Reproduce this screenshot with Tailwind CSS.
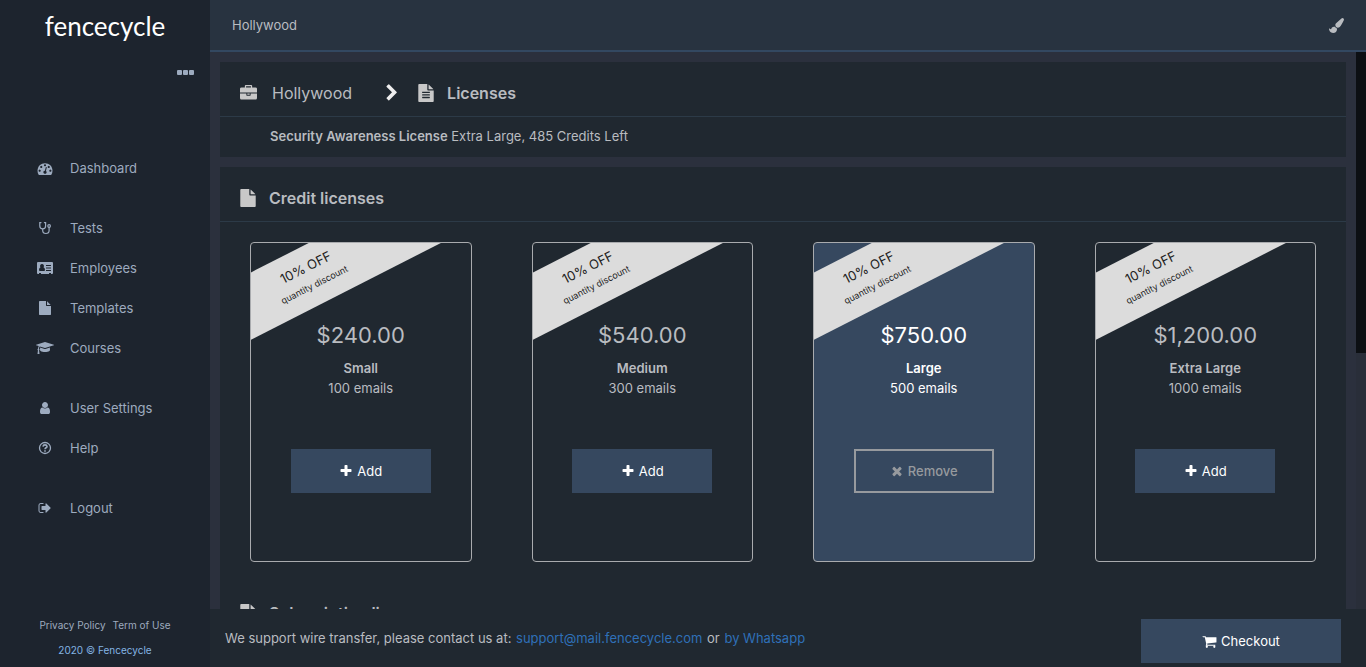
<!DOCTYPE html>
<html lang="en">
  <head>
    <meta charset="UTF-8" />
    <meta name="viewport" content="width=device-width, initial-scale=1.0" />
    <title>Fencecycle - Licenses</title>
    <script src="https://cdn.jsdelivr.net/npm/@tailwindcss/browser@4"></script>
  </head>
  <body class="flex h-screen overflow-hidden bg-[#2b303d] font-['Inter',sans-serif] text-[13px] leading-5 text-[#b9bcc0]">
    <!-- icon sprite -->
    <svg class="hidden" aria-hidden="true" xmlns="http://www.w3.org/2000/svg">
      <symbol id="file" viewBox="0 0 1792 1792">
        <path d="M1152 512v-472q22 14 36 28l408 408q14 14 28 36h-472zm-128 32q0 40 28 68t68 28h544v1056q0 40-28 68t-68 28h-1344q-40 0-68-28t-28-68v-1600q0-40 28-68t68-28h800v544z" />
      </symbol>
      <symbol id="file-text" viewBox="0 0 1792 1792">
        <path d="M1596 476q14 14 28 36h-472v-472q22 14 36 28zm-476 164h544v1056q0 40-28 68t-68 28h-1344q-40 0-68-28t-28-68v-1600q0-40 28-68t68-28h800v544q0 40 28 68t68 28zm160 736v-64q0-14-9-23t-23-9h-704q-14 0-23 9t-9 23v64q0 14 9 23t23 9h704q14 0 23-9t9-23zm0-256v-64q0-14-9-23t-23-9h-704q-14 0-23 9t-9 23v64q0 14 9 23t23 9h704q14 0 23-9t9-23zm0-256v-64q0-14-9-23t-23-9h-704q-14 0-23 9t-9 23v64q0 14 9 23t23 9h704q14 0 23-9t9-23z" />
      </symbol>
      <symbol id="plus" viewBox="0 0 1792 1792">
        <path d="M1600 736v192q0 40-28 68t-68 28h-416v416q0 40-28 68t-68 28h-192q-40 0-68-28t-28-68v-416h-416q-40 0-68-28t-28-68v-192q0-40 28-68t68-28h416v-416q0-40 28-68t68-28h192q40 0 68 28t28 68v416h416q40 0 68 28t28 68z" />
      </symbol>
    </svg>

    <aside class="flex w-[210px] shrink-0 flex-col bg-[#1d242e] text-[#9dabbf]">
      <a href="#" class="flex h-[52px] items-center justify-center font-['Lato',sans-serif] text-[26px] text-white">fencecycle</a>
      <div class="flex h-24 items-start justify-end pt-[18px] pr-4">
        <button type="button" aria-label="More">
          <svg class="h-[5px] w-[17px]" viewBox="0 0 17 5" fill="currentColor"><rect width="5" height="5" rx="1" /><rect x="6" width="5" height="5" rx="1" /><rect x="12" width="5" height="5" rx="1" /></svg>
        </button>
      </div>

      <nav class="flex flex-col gap-5">
        <div>
          <a href="#" class="flex h-10 items-center gap-4 pl-9">
            <svg class="h-[15px] w-[18px]" viewBox="0 0 1792 1792" fill="currentColor"><path d="M384 1152q0-53-37.5-90.5t-90.5-37.5-90.5 37.5-37.5 90.5 37.5 90.5 90.5 37.5 90.5-37.5 37.5-90.5zm192-448q0-53-37.5-90.5t-90.5-37.5-90.5 37.5-37.5 90.5 37.5 90.5 90.5 37.5 90.5-37.5 37.5-90.5zm428 481l101-382q6-26-7.5-48.5t-38.5-29.5-48 6.5-30 39.5l-101 382q-60 5-107 43.5t-63 98.5q-20 77 20 146t117 89 146-20 89-117q16-60-6-117t-72-91zm660-33q0-53-37.5-90.5t-90.5-37.5-90.5 37.5-37.5 90.5 37.5 90.5 90.5 37.5 90.5-37.5 37.5-90.5zm-640-640q0-53-37.5-90.5t-90.5-37.5-90.5 37.5-37.5 90.5 37.5 90.5 90.5 37.5 90.5-37.5 37.5-90.5zm448 192q0-53-37.5-90.5t-90.5-37.5-90.5 37.5-37.5 90.5 37.5 90.5 90.5 37.5 90.5-37.5 37.5-90.5zm320 448q0 261-141 483-19 29-54 29h-1402q-35 0-54-29-141-221-141-483 0-182 71-348t191-286 286-191 348-71 348 71 286 191 191 286 71 348z" /></svg>
            Dashboard
          </a>
        </div>
        <div>
          <a href="#" class="flex h-10 items-center gap-4 pl-9">
            <svg class="h-[14px] w-[18px]" viewBox="0 0 14 14" fill="none" stroke="currentColor" stroke-width="1.2" stroke-linecap="round"><path d="M3 1.6H1.8V5q0 2.800 2.900 2.800T7.600 5V1.600H6.400M4.700 7.900v1.600q0 3 3.200 3t3.200-3V6.400" /><circle cx="11.100" cy="5" r="1.300" /></svg>
            Tests
          </a>
          <a href="#" class="flex h-10 items-center gap-4 pl-9">
            <svg class="h-[14px] w-[18px]" viewBox="0 0 18 14" fill="currentColor"><path fill-rule="evenodd" d="M2 1h14a1 1 0 0 1 1 1v10a1 1 0 0 1-1 1h-1v-1h-2v1H5v-1H3v1H2a1 1 0 0 1-1-1V2a1 1 0 0 1 1-1zm4 2a2 2 0 0 0-1.500 3.300Q3 6.800 3 9q0 1 1 1h4q1 0 1-1 0-2.200-1.500-2.700A2 2 0 0 0 6 3zm4 1v1h5V4zm0 2.500v1h5v-1zM10 9v1h5V9z" /></svg>
            Employees
          </a>
          <a href="#" class="flex h-10 items-center gap-4 pl-9">
            <svg class="h-[14px] w-[18px]" fill="currentColor"><use href="#file" /></svg>
            Templates
          </a>
          <a href="#" class="flex h-10 items-center gap-4 pl-9">
            <svg class="h-[14px] w-[18px]" viewBox="0 0 2304 1792" fill="currentColor"><path d="M1774 836l18 316q4 69-82 128t-235 93.500-323 34.500-323-34.500-235-93.500-82-128l18-316 574 181q22 7 48 7t48-7zm530-324q0 23-22 31l-1120 352q-4 1-10 1t-10-1l-652-206q-43 34-71 111.500t-34 178.500q63 36 63 109 0 69-58 107l58 433q2 14-8 25-9 11-24 11h-192q-15 0-24-11-10-11-8-25l58-433q-58-38-58-107 0-73 65-111 11-207 98-330l-333-104q-22-8-22-31t22-31l1120-352q4-1 10-1t10 1l1120 352q22 8 22 31z" /></svg>
            Courses
          </a>
        </div>
        <div>
          <a href="#" class="flex h-10 items-center gap-4 pl-9">
            <svg class="h-[14px] w-[18px]" viewBox="0 0 1792 1792" fill="currentColor"><path d="M1536 1399q0 109-62.500 187t-150.500 78h-854q-88 0-150.500-78t-62.500-187q0-85 8.500-160.500t31.500-152 58.500-131 94-89 134.500-34.500q131 128 313 128t313-128q76 0 134.500 34.500t94 89 58.500 131 31.500 152 8.500 160.500zm-256-887q0 159-112.500 271.500t-271.500 112.500-271.500-112.500-112.500-271.500 112.500-271.500 271.500-112.500 271.500 112.500 112.500 271.500z" /></svg>
            User Settings
          </a>
          <a href="#" class="flex h-10 items-center gap-4 pl-9">
            <svg class="h-[14px] w-[18px]" viewBox="0 0 14 14" fill="none" stroke="currentColor"><circle cx="7" cy="7" r="5.500" stroke-width="1.300" /><path d="M5 5.600q.2-1.700 2-1.700t2 1.500q0 .8-1 1.400t-1 1.500" stroke-width="1.600" /><path d="M7 9.200v1.500" stroke-width="1.600" /></svg>
            Help
          </a>
        </div>
        <div>
          <a href="#" class="flex h-10 items-center gap-4 pl-9">
            <svg class="h-[14px] w-[18px]" viewBox="0 0 1792 1792" fill="currentColor"><path d="M704 1440q0 4 1 20t.5 26.500-3 23.500-10 19.500-20.500 6.500h-320q-119 0-203.500-84.500t-84.500-203.500v-704q0-119 84.500-203.500t203.500-84.500h320q13 0 22.500 9.500t9.500 22.500q0 4 1 20t.5 26.500-3 23.500-10 19.500-20.500 6.500h-320q-66 0-113 47t-47 113v704q0 66 47 113t113 47h312l11.500 1 11.500 3 8 5.500 7 9 2 13.500zm928-544q0 26-19 45l-544 544q-19 19-45 19t-45-19-19-45v-288h-448q-26 0-45-19t-19-45v-384q0-26 19-45t45-19h448v-288q0-26 19-45t45-19 45 19l544 544q19 19 19 45z" /></svg>
            Logout
          </a>
        </div>
      </nav>

      <div class="mt-auto pb-1 text-center text-[10px] leading-[25px]">
        <div class="flex justify-center gap-[7px]">
          <a href="#">Privacy Policy</a>
          <a href="#">Term of Use</a>
        </div>
        <a href="#" class="text-[#84b4e4]">2020 © Fencecycle</a>
      </div>
    </aside>

    <div class="flex min-w-0 flex-1 flex-col">
      <header class="flex h-[52px] shrink-0 items-center justify-between border-b-2 border-[#334861] bg-[#283340] px-[22px]">
        <span>Hollywood</span>
        <button type="button" aria-label="Change theme">
          <svg class="size-[15px]" viewBox="0 0 1792 1792" fill="currentColor"><path d="M1615 0q70 0 122.500 46.500t52.500 116.500q0 63-45 151-332 629-465 752-97 91-218 91-126 0-216.500-92.500t-90.500-219.500q0-128 92-212l638-579q59-54 130-54zm-909 1034q39 76 106.500 130t150.500 76l1 71q4 213-129.500 347t-348.500 134q-123 0-218-46.500t-152.500-127.500-86.500-183-29-220q7 5 41 30t62 44.500 59 36.500 46 17q41 0 55-37 25-66 57.500-112.500t69.500-76 88-47.500 103-25.500 125-10.500z" /></svg>
        </button>
      </header>

      <div class="flex min-h-0 flex-1">
        <main class="flex min-w-0 flex-1 flex-col gap-2.5 overflow-hidden p-2.5">
          <section class="shrink-0 bg-[#202830]">
            <div class="flex h-[55px] items-center border-b border-[#2c3a47] px-5 pt-2 text-base">
              <svg class="size-[17px] text-[#c8c8c8]" viewBox="0 0 1792 1792" fill="currentColor"><path d="M640 256h512v-128h-512v128zm1152 640v480q0 66-47 113t-113 47h-1472q-66 0-113-47t-47-113v-480h672v160q0 26 19 45t45 19h320q26 0 45-19t19-45v-160h672zm-768 0v128h-256v-128h256zm768-480v384h-1792v-384q0-66 47-113t113-47h352v-160q0-40 28-68t68-28h576q40 0 68 28t28 68v160h352q66 0 113 47t47 113z" /></svg>
              <a href="#" class="ml-[15px]">Hollywood</a>
              <svg class="ml-[31px] size-[18px] text-[#eeeeee]" viewBox="0 0 1792 1792" fill="currentColor"><path d="M1363 877l-742 742q-19 19-45 19t-45-19l-166-166q-19-19-19-45t19-45l531-531-531-531q-19-19-19-45t19-45l166-166q19-19 45-19t45 19l742 742q19 19 19 45t-19 45z" /></svg>
              <svg class="ml-4 size-[18px] text-[#c8c8c8]" fill="currentColor"><use href="#file-text" /></svg>
              <h1 class="ml-3 font-semibold">Licenses</h1>
            </div>
            <p class="h-10 pt-[9px] pl-[50px]"><strong class="font-semibold">Security Awareness License</strong> Extra Large, 485 Credits Left</p>
          </section>

          <section class="shrink-0 bg-[#202830]">
            <div class="flex h-[55px] items-center gap-3 border-b border-[#2c3a47] px-[19px] pt-2">
              <svg class="size-[18px] text-[#c8c8c8]" fill="currentColor"><use href="#file" /></svg>
              <h2 class="text-base font-semibold">Credit licenses</h2>
            </div>

            <div class="grid grid-cols-4 gap-[60px] px-[30px] py-5">
              <article class="relative flex h-80 flex-col items-center overflow-hidden rounded border border-[#a9abae] pt-[78px]">
                <div class="absolute top-[3px] -left-[101px] flex h-[60px] w-80 -rotate-27 flex-col items-center justify-center bg-[#dcdcdc] text-[#222222]">
                  <span>10% OFF</span>
                  <span class="text-[9px]">quantity discount</span>
                </div>
                <div class="text-[22px] leading-[28px]">$240.00</div>
                <h3 class="mt-[9px] font-semibold">Small</h3>
                <p>100 emails</p>
                <button type="button" class="mt-[51px] flex h-11 w-[140px] items-center justify-center gap-1 bg-[#36485f] text-white">
                  <svg class="size-[14px]" fill="currentColor"><use href="#plus" /></svg>
                  Add
                </button>
              </article>

              <article class="relative flex h-80 flex-col items-center overflow-hidden rounded border border-[#a9abae] pt-[78px]">
                <div class="absolute top-[3px] -left-[101px] flex h-[60px] w-80 -rotate-27 flex-col items-center justify-center bg-[#dcdcdc] text-[#222222]">
                  <span>10% OFF</span>
                  <span class="text-[9px]">quantity discount</span>
                </div>
                <div class="text-[22px] leading-[28px]">$540.00</div>
                <h3 class="mt-[9px] font-semibold">Medium</h3>
                <p>300 emails</p>
                <button type="button" class="mt-[51px] flex h-11 w-[140px] items-center justify-center gap-1 bg-[#36485f] text-white">
                  <svg class="size-[14px]" fill="currentColor"><use href="#plus" /></svg>
                  Add
                </button>
              </article>

              <!-- selected -->
              <article class="relative flex h-80 flex-col items-center overflow-hidden rounded border border-[#a9abae] bg-[#36485f] pt-[78px] text-white">
                <div class="absolute top-[3px] -left-[101px] flex h-[60px] w-80 -rotate-27 flex-col items-center justify-center bg-[#dcdcdc] text-[#222222]">
                  <span>10% OFF</span>
                  <span class="text-[9px]">quantity discount</span>
                </div>
                <div class="text-[22px] leading-[28px]">$750.00</div>
                <h3 class="mt-[9px] font-semibold">Large</h3>
                <p>500 emails</p>
                <button type="button" class="mt-[51px] flex h-11 w-[140px] items-center justify-center gap-1 border-2 border-[#979a9e] font-medium text-[#979a9e]">
                  <svg class="size-[14px]" viewBox="0 0 1792 1792" fill="currentColor"><path d="M1490 1322q0 40-28 68l-136 136q-28 28-68 28t-68-28l-294-294-294 294q-28 28-68 28t-68-28l-136-136q-28-28-28-68t28-68l294-294-294-294q-28-28-28-68t28-68l136-136q28-28 68-28t68 28l294 294 294-294q28-28 68-28t68 28l136 136q28 28 28 68t-28 68l-294 294 294 294q28 28 28 68z" /></svg>
                  Remove
                </button>
              </article>

              <article class="relative flex h-80 flex-col items-center overflow-hidden rounded border border-[#a9abae] pt-[78px]">
                <div class="absolute top-[3px] -left-[101px] flex h-[60px] w-80 -rotate-27 flex-col items-center justify-center bg-[#dcdcdc] text-[#222222]">
                  <span>10% OFF</span>
                  <span class="text-[9px]">quantity discount</span>
                </div>
                <div class="text-[22px] leading-[28px]">$1,200.00</div>
                <h3 class="mt-[9px] font-semibold">Extra Large</h3>
                <p>1000 emails</p>
                <button type="button" class="mt-[51px] flex h-11 w-[140px] items-center justify-center gap-1 bg-[#36485f] text-white">
                  <svg class="size-[14px]" fill="currentColor"><use href="#plus" /></svg>
                  Add
                </button>
              </article>
            </div>

            <div class="flex h-[55px] items-center gap-3 border-b border-[#2c3a47] px-[19px] pt-2">
              <svg class="size-[18px] text-[#c8c8c8]" fill="currentColor"><use href="#file" /></svg>
              <h2 class="text-base font-semibold">Subscription licenses</h2>
            </div>
          </section>
        </main>

        <!-- scrollbar -->
        <div class="w-2.5 shrink-0 bg-[#292e39]">
          <div class="h-[54%] bg-[#0c0f13]"></div>
        </div>
      </div>

      <footer class="flex h-[58px] shrink-0 items-center justify-between bg-[#202830] pr-[25px] pl-[15px]">
        <p>
          We support wire transfer, please contact us at:
          <a href="#" class="mx-px text-[#2f70b8]">support@mail.fencecycle.com</a>
          or
          <a href="#" class="mx-px text-[#2f70b8]">by Whatsapp</a>
        </p>
        <button type="button" class="mt-1.5 flex h-11 w-[200px] items-center justify-center gap-1 bg-[#36485f] text-white">
          <svg class="size-[15px]" viewBox="0 0 1792 1792" fill="currentColor"><path d="M704 1536q0 52-38 90t-90 38-90-38-38-90 38-90 90-38 90 38 38 90zm896 0q0 52-38 90t-90 38-90-38-38-90 38-90 90-38 90 38 38 90zm128-1088v512q0 24-16.500 42.500t-40.500 21.500l-1044 122q13 60 13 70 0 16-24 64h920q26 0 45 19t19 45-19 45-45 19h-1024q-26 0-45-19t-19-45q0-11 8-31.500t16-36 21.500-40 15.500-29.500l-177-823h-204q-26 0-45-19t-19-45 19-45 45-19h256q16 0 28.500 6.500t19.500 15.500 13 24.500 8 26 5.500 29.500 4.500 26h1201q26 0 45 19t19 45z" /></svg>
          Checkout
        </button>
      </footer>
    </div>
  </body>
</html>
